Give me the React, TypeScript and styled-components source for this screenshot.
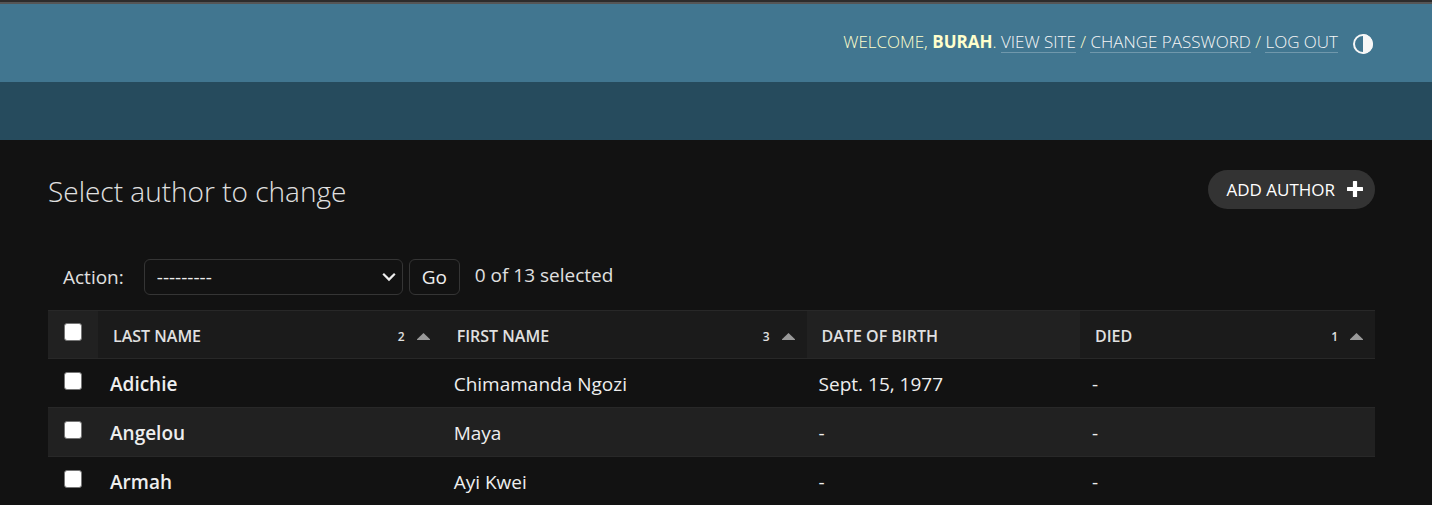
import React, { useState } from 'react';
import styled, { createGlobalStyle } from 'styled-components';

const GlobalStyle = createGlobalStyle`
  *, *::before, *::after { box-sizing: border-box; }
  html { background: #121212; }
  body {
    margin: 0;
    overflow: hidden;
    background: #121212;
    color: #eeeeee;
    font-family: "Segoe UI", "Open Sans", "Noto Sans", sans-serif;
    font-size: 19px;
    line-height: 24px;
  }
`;

const Page = styled.div`
  border-top: 2px solid #2d2c2c;
`;

const Header = styled.header`
  display: flex;
  justify-content: flex-end;
  align-items: center;
  gap: 15px;
  height: 80px;
  padding: 2px 59px 0 48px;
  border-top: 2px solid #555555;
  background: #417690;
  color: #ffffcc;
`;

const UserTools = styled.div`
  padding-bottom: 4px;
  font-size: 17px;
  font-weight: 300;
  line-height: 20px;
  text-transform: uppercase;
  white-space: nowrap;

  strong { font-weight: 700; }
`;

const ToolLink = styled.a`
  display: inline-block;
  color: #f7f7f7;
  text-decoration: none;
  border-bottom: 1px solid rgba(255, 255, 255, 0.25);
`;

const ThemeToggle = styled.button`
  display: flex;
  padding: 0;
  border: 0;
  background: transparent;
  color: #f7f7f7;
  cursor: pointer;
`;

const Breadcrumbs = styled.nav`
  height: 58px;
  background: #264b5d;
`;

const Content = styled.main`
  padding: 30px 57px 0 48px;
`;

const TitleRow = styled.div`
  display: flex;
  justify-content: space-between;
  align-items: flex-start;
  margin-bottom: 50px;
`;

const Title = styled.h1`
  margin: 0;
  padding-top: 4px;
  color: #e0e0e0;
  font-size: 28px;
  font-weight: 300;
  line-height: 35px;
`;

const AddLink = styled.a`
  display: flex;
  align-items: center;
  gap: 12px;
  height: 39px;
  padding: 0 12px 0 18px;
  border-radius: 20px;
  background: #333333;
  color: #ffffff;
  font-size: 17px;
  text-decoration: none;
  text-transform: uppercase;

  svg { margin-bottom: 2px; }
`;

const Actions = styled.form`
  display: flex;
  align-items: center;
  height: 36px;
  padding-left: 15px;
  margin-bottom: 15px;
  color: #e0e0e0;
`;

const ActionLabel = styled.label`
  display: flex;
  align-items: center;
  gap: 20px;
`;

const SelectBox = styled.span`
  position: relative;
  display: flex;
  width: 259px;

  svg {
    position: absolute;
    top: 13px;
    right: 7px;
    pointer-events: none;
  }
`;

const ActionSelect = styled.select`
  appearance: none;
  width: 100%;
  height: 36px;
  padding: 0 28px 0 12px;
  border: 1px solid #353535;
  border-radius: 6px;
  background: #121212;
  color: #eeeeee;
  font: inherit;
`;

const GoButton = styled.button`
  width: 51px;
  height: 36px;
  margin: 0 15px 0 6px;
  padding: 0;
  border: 1px solid #353535;
  border-radius: 6px;
  background: #121212;
  color: #eeeeee;
  font: inherit;
`;

const Counter = styled.span`
  padding-bottom: 4px;
`;

const Table = styled.table`
  width: 100%;
  table-layout: fixed;
  border-collapse: separate;
  border-spacing: 0;
`;

const Col = styled.col<{ $width?: string }>`
  width: ${({ $width }) => $width ?? 'auto'};
`;

const HeadCell = styled.th<{ $sorted?: boolean }>`
  height: 49px;
  padding: 3px 12px 0 15px;
  border-top: 1px solid #282828;
  border-bottom: 1px solid #282828;
  background: ${({ $sorted }) => ($sorted ? '#1b1b1b' : '#212121')};
  color: #e0e0e0;
  font-size: 16px;
  font-weight: 600;
  text-align: left;
  text-transform: uppercase;
`;

const CheckHeadCell = styled(HeadCell)`
  padding: 11px 16px 0;
  vertical-align: top;
`;

const HeadContent = styled.div`
  display: flex;
  align-items: center;
  justify-content: space-between;
`;

const SortInfo = styled.span`
  display: flex;
  align-items: center;
  gap: 12px;
  padding-top: 1px;
  color: #e0e0e0;
  font-size: 12px;
`;

const Row = styled.tr`
  &:nth-child(even) { background: #212121; }
`;

const Cell = styled.td`
  height: 49px;
  padding: 2px 12px 0;
  border-bottom: 1px solid #282828;
`;

const NameCell = styled.th`
  height: 49px;
  padding: 2px 12px 0;
  border-bottom: 1px solid #282828;
  font-weight: 600;
  text-align: left;
`;

const CheckCell = styled(Cell)`
  padding: 12px 16px 0;
  vertical-align: top;
`;

const NameLink = styled.a`
  color: #eeeeee;
  text-decoration: none;
`;

const Checkbox = styled.input`
  display: block;
  appearance: none;
  width: 18px;
  height: 18px;
  margin: 1px 0 0;
  border: 1px solid #767676;
  border-radius: 3px;
  background: #ffffff;

  &:checked { background: #79aec8; box-shadow: inset 0 0 0 3px #ffffff; }
`;

type Column = { label: string; order?: number };

const columns: Column[] = [
  { label: 'Last name', order: 2 },
  { label: 'First name', order: 3 },
  { label: 'Date of birth' },
  { label: 'Died', order: 1 },
];

const authors = [
  { last: 'Adichie', first: 'Chimamanda Ngozi', born: 'Sept. 15, 1977', died: '-' },
  { last: 'Angelou', first: 'Maya', born: '-', died: '-' },
  { last: 'Armah', first: 'Ayi Kwei', born: '-', died: '-' },
];

const ContrastIcon = () => (
  <svg width="20" height="20" viewBox="0 0 20 20" aria-hidden="true">
    <circle cx="10" cy="10" r="9" fill="none" stroke="currentColor" strokeWidth="2" />
    <path d="M10 0a10 10 0 0 1 0 20z" fill="currentColor" />
  </svg>
);

const PlusIcon = () => (
  <svg width="16" height="16" viewBox="0 0 16 16" aria-hidden="true">
    <path
      d="M6.5 0h3q.6 0 .6.6v5.300h5.300q.6 0 .6.6v3q0 .6-.6.6h-5.300v5.300q0 .6-.6.6h-3q-.6 0-.6-.6v-5.300H.6q-.6 0-.6-.6v-3q0-.6.6-.6h5.300V.6q0-.6.6-.6z"
      fill="#ffffff"
    />
  </svg>
);

const ChevronIcon = () => (
  <svg width="14" height="10" viewBox="0 0 14 10" aria-hidden="true">
    <path d="M1.200 1.800 7 7.600l5.800-5.800" fill="none" stroke="#eeeeee" strokeWidth="2.200" />
  </svg>
);

const SortArrow = () => (
  <svg width="13" height="7" viewBox="0 0 13 7" aria-hidden="true">
    <path d="M6.500 0 13 6.200V7H0v-.8z" fill="#999999" />
  </svg>
);

export default function App() {
  const [selected, setSelected] = useState<string[]>([]);
  const toggle = (name: string) =>
    setSelected((s) => (s.includes(name) ? s.filter((n) => n !== name) : [...s, name]));
  const allSelected = selected.length === authors.length;

  return (
    <>
      <GlobalStyle />
      <Page>
        <Header>
          <UserTools>
            Welcome, <strong>Burah</strong>. <ToolLink href="#site">View site</ToolLink>
            {' / '}
            <ToolLink href="#password">Change password</ToolLink>
            {' / '}
            <ToolLink href="#logout">Log out</ToolLink>
          </UserTools>
          <ThemeToggle type="button" aria-label="Toggle theme">
            <ContrastIcon />
          </ThemeToggle>
        </Header>
        <Breadcrumbs aria-label="Breadcrumbs" />
        <Content>
          <TitleRow>
            <Title>Select author to change</Title>
            <AddLink href="#add">
              Add author
              <PlusIcon />
            </AddLink>
          </TitleRow>
          <Actions onSubmit={(e) => e.preventDefault()}>
            <ActionLabel>
              Action:
              <SelectBox>
                <ActionSelect defaultValue="">
                  <option value="">---------</option>
                  <option value="delete">Delete selected authors</option>
                </ActionSelect>
                <ChevronIcon />
              </SelectBox>
            </ActionLabel>
            <GoButton type="submit">Go</GoButton>
            <Counter>{selected.length} of 13 selected</Counter>
          </Actions>
          <Table>
            <colgroup>
              <Col $width="50px" />
              <Col $width="25.9%" />
              <Col $width="27.5%" />
              <Col $width="20.6%" />
              <Col />
            </colgroup>
            <thead>
              <tr>
                <CheckHeadCell scope="col">
                  <Checkbox
                    type="checkbox"
                    aria-label="Select all authors"
                    checked={allSelected}
                    onChange={() => setSelected(allSelected ? [] : authors.map((a) => a.last))}
                  />
                </CheckHeadCell>
                {columns.map(({ label, order }) => (
                  <HeadCell key={label} scope="col" $sorted={order !== undefined}>
                    <HeadContent>
                      {label}
                      {order !== undefined && (
                        <SortInfo>
                          {order}
                          <SortArrow />
                        </SortInfo>
                      )}
                    </HeadContent>
                  </HeadCell>
                ))}
              </tr>
            </thead>
            <tbody>
              {authors.map((a) => (
                <Row key={a.last}>
                  <CheckCell>
                    <Checkbox
                      type="checkbox"
                      aria-label={`Select ${a.last}`}
                      checked={selected.includes(a.last)}
                      onChange={() => toggle(a.last)}
                    />
                  </CheckCell>
                  <NameCell scope="row">
                    <NameLink href={`#${a.last}`}>{a.last}</NameLink>
                  </NameCell>
                  <Cell>{a.first}</Cell>
                  <Cell>{a.born}</Cell>
                  <Cell>{a.died}</Cell>
                </Row>
              ))}
            </tbody>
          </Table>
        </Content>
      </Page>
    </>
  );
}
